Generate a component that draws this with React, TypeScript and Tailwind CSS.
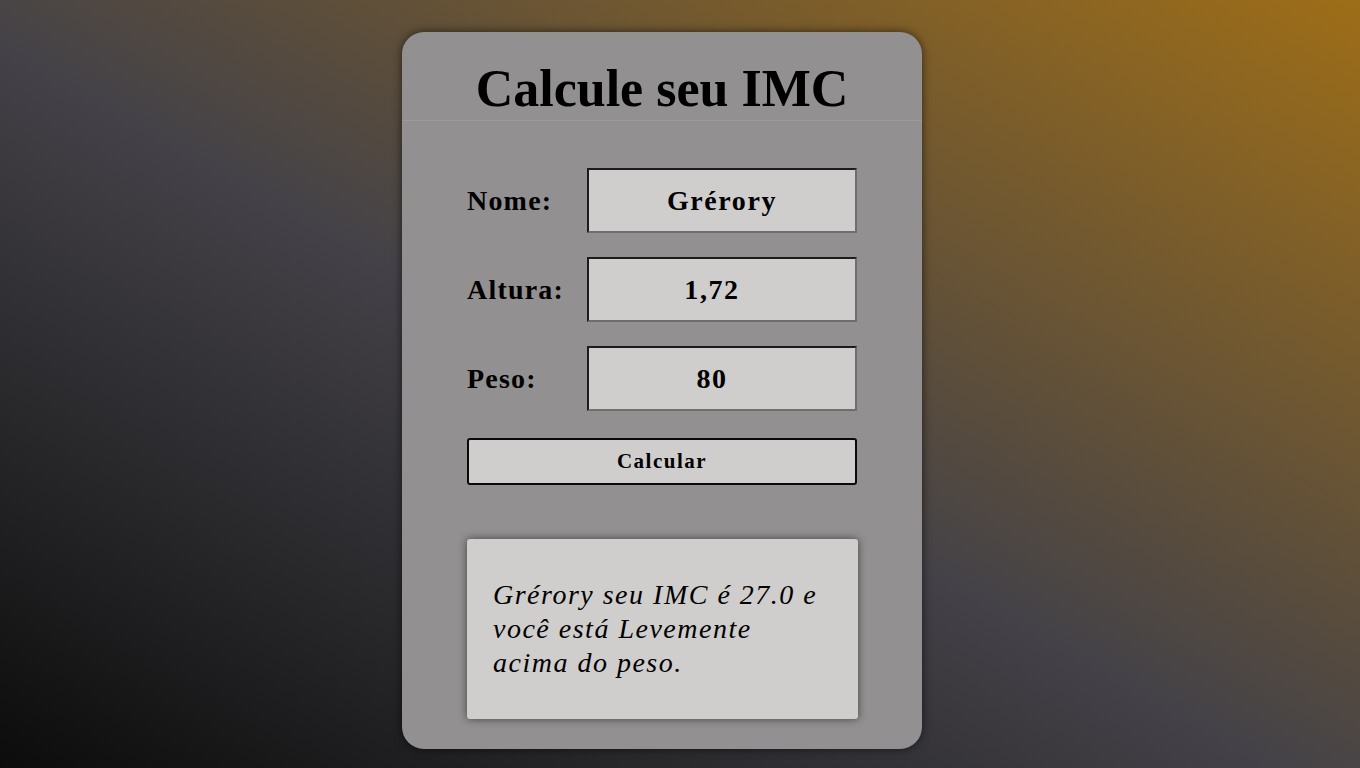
import React from "react";

const serif = "font-['Liberation_Serif','Times_New_Roman',serif]";

const Field = ({label, value, numeric}: {label: string; value: string; numeric?: boolean}) => (
    <div className="flex items-center">
        <label className="w-[120px] text-[28px] font-bold text-black leading-none tracking-[1.2px]">
            {label}
        </label>
        <input
            readOnly
            value={value}
            className={`${serif} w-[270px] h-[65px] bg-[#cfcecd] text-center text-[28px] font-bold text-black tracking-[1.6px]
                        border-2 border-t-[#1c1c1c] border-l-[#1c1c1c] border-b-[#6f6e6f] border-r-[#6f6e6f]
                        outline-none ${numeric ? "pr-[20px]" : ""}`}
        />
    </div>
);

export default function App() {
    return (
        <div className={`${serif} w-full h-[768px] overflow-hidden
                        bg-[linear-gradient(to_top_right,#0c0c0c,#444248_47%,#9e6e18)]`}>
            <div className="ml-[402px] pt-[32px]">
                <div className="w-[520px] h-[717px] rounded-[22px] bg-[#929091] shadow-[0_0_10px_rgba(0,0,0,0.6)] flex flex-col">
                    <div className="h-[89px] flex items-end justify-center pb-[5px] border-b border-[#9c9a9b]">
                        <h1 className="text-[52px] font-bold text-black leading-none">Calcule seu IMC</h1>
                    </div>

                    <div className="px-[65px] pt-[47px] flex flex-col">
                        <div className="flex flex-col gap-[24px]">
                            <Field label="Nome:" value="Grérory"/>
                            <Field label="Altura:" value="1,72" numeric/>
                            <Field label="Peso:" value="80" numeric/>
                        </div>

                        <button className="mt-[27px] w-[390px] h-[47px] bg-[#cfcecd] border-2 border-[#0a0a0a] rounded-[3px]
                                           text-[21px] font-bold text-black tracking-[1.5px]">
                            Calcular
                        </button>

                        <div className="mt-[54px] w-[391px] h-[180px] bg-[#cfcecd] rounded-[3px]
                                        shadow-[0_0_9px_rgba(0,0,0,0.55)] pl-[26px] pr-[30px] flex items-center">
                            <p className="italic text-[28px] leading-[34px] text-black tracking-[1.5px]">
                                Grérory seu IMC é 27.0 e você está Levemente acima do peso.
                            </p>
                        </div>
                    </div>
                </div>
            </div>
        </div>
    );
}
